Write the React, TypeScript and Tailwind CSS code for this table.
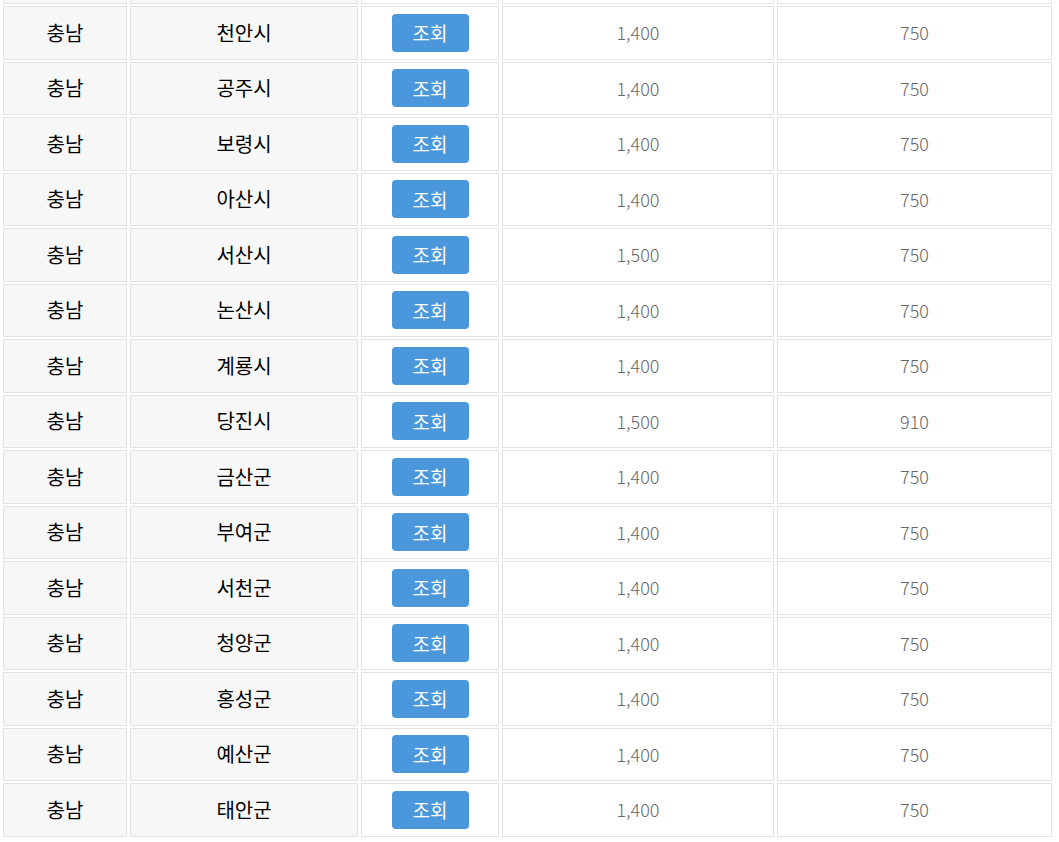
import React from "react";

const rows: [string, string, string, string][] = [
  ["충남", "천안시", "1,400", "750"],
  ["충남", "공주시", "1,400", "750"],
  ["충남", "보령시", "1,400", "750"],
  ["충남", "아산시", "1,400", "750"],
  ["충남", "서산시", "1,500", "750"],
  ["충남", "논산시", "1,400", "750"],
  ["충남", "계룡시", "1,400", "750"],
  ["충남", "당진시", "1,500", "910"],
  ["충남", "금산군", "1,400", "750"],
  ["충남", "부여군", "1,400", "750"],
  ["충남", "서천군", "1,400", "750"],
  ["충남", "청양군", "1,400", "750"],
  ["충남", "홍성군", "1,400", "750"],
  ["충남", "예산군", "1,400", "750"],
  ["충남", "태안군", "1,400", "750"],
];

const font = { fontFamily: '"Noto Sans CJK KR", "Noto Sans", sans-serif' };

export default function App() {
  return (
    <div className="w-[1059px] h-[842px] overflow-hidden bg-white pl-[3px] pr-[7px]" style={font}>
      <div className="flex flex-col gap-[2px]">
        <div className="grid grid-cols-[124px_228px_138px_272px_275px] gap-x-[3px] h-[4px]">
          <div className="border border-t-0 border-[#e3e3e3] bg-[#f7f7f7]" />
          <div className="border border-t-0 border-[#e3e3e3] bg-[#f7f7f7]" />
          <div className="border border-t-0 border-[#e3e3e3] bg-white" />
          <div className="border border-t-0 border-[#e3e3e3] bg-white" />
          <div className="border border-t-0 border-[#e3e3e3] bg-white" />
        </div>
        {rows.map((r, i) => (
          <div key={i} className="grid grid-cols-[124px_228px_138px_272px_275px] gap-x-[3px] h-[53.5px]">
            <div className="border border-[#e3e3e3] bg-[#f7f7f7] flex items-center justify-center text-[20px] font-normal text-black">
              {r[0]}
            </div>
            <div className="border border-[#e3e3e3] bg-[#f7f7f7] flex items-center justify-center text-[20px] font-normal text-black">
              {r[1]}
            </div>
            <div className="border border-[#e3e3e3] bg-white flex items-center justify-center">
              <button className="w-[77px] h-[38px] rounded-[4px] bg-[#4a98db] text-white text-[19px] leading-none">
                조회
              </button>
            </div>
            <div className="border border-[#e3e3e3] bg-white flex items-center justify-center text-[18px] font-light text-[#666]">
              {r[2]}
            </div>
            <div className="border border-[#e3e3e3] bg-white flex items-center justify-center text-[18px] font-light text-[#666]">
              {r[3]}
            </div>
          </div>
        ))}
      </div>
    </div>
  );
}
